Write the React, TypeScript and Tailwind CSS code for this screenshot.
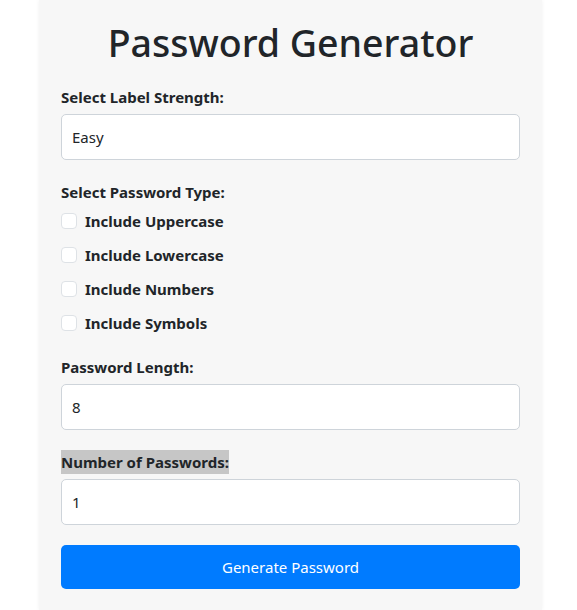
import React from "react";

export default function App() {
  const checks = ["Include Uppercase", "Include Lowercase", "Include Numbers", "Include Symbols"];
  return (
    <div className="min-h-[610px] w-full bg-white flex justify-center pl-[4px]" style={{ fontFamily: '"Noto Sans", "Open Sans", sans-serif' }}>
      <div className="w-[503px] bg-[#f7f7f7] shadow-[0_0_4px_rgba(0,0,0,0.06)] px-[22px] pt-[19px] pb-[20px] text-[#212529]">
        <h1 className="text-center text-[37.5px] leading-[48px] font-medium mb-[18px]">Password Generator</h1>
        <div className="mb-[20px]">
          <label className="block text-[15px] font-bold leading-[24px] mb-[5px]">Select Label Strength:</label>
          <div className="h-[46px] bg-white border border-[#ced4da] rounded-[5px] flex items-center px-[10px] text-[15px]">Easy</div>
        </div>
        <div className="mb-[20px]">
          <div className="text-[15px] font-bold leading-[24px] mb-[5px]">Select Password Type:</div>
          <div className="flex flex-col gap-[10px]">
            {checks.map((c) => (
              <label key={c} className="flex items-center gap-[8px] h-[24px]">
                <span className="w-[16px] h-[16px] bg-white border border-[#dee2e6] rounded-[4px]" />
                <span className="text-[15px] font-bold">{c}</span>
              </label>
            ))}
          </div>
        </div>
        <div className="mb-[20px]">
          <label className="block text-[15px] font-bold leading-[24px] mb-[5px]">Password Length:</label>
          <div className="h-[46px] bg-white border border-[#ced4da] rounded-[5px] flex items-center px-[10px] text-[15px]">8</div>
        </div>
        <div className="mb-[20px]">
          <label className="inline-block text-[15px] font-bold leading-[24px] mb-[5px] bg-[#c6c6c6]">Number of Passwords:</label>
          <div className="h-[46px] bg-white border border-[#ced4da] rounded-[5px] flex items-center px-[10px] text-[15px]">1</div>
        </div>
        <button className="w-full h-[44px] bg-[#007bff] text-white rounded-[5px] text-[15px]">Generate Password</button>
      </div>
    </div>
  );
}
